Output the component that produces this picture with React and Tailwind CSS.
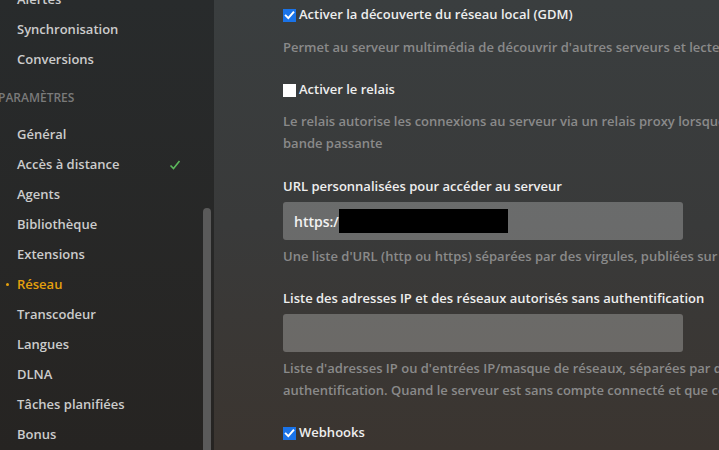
import React from "react";

const font = { fontFamily: '"Open Sans", "Noto Sans", sans-serif' };

function Check({ checked }) {
  if (!checked) {
    return <span className="block w-[13px] h-[13px] bg-white shrink-0" />;
  }
  return (
    <span className="flex items-center justify-center w-[13px] h-[13px] bg-[#1a73e8] shrink-0">
      <svg width="11" height="11" viewBox="0 0 11 11">
        <path d="M1.8 5.6 L4.3 8.1 L9.3 2.3" fill="none" stroke="white" strokeWidth="2" strokeLinecap="square" />
      </svg>
    </span>
  );
}

const items = [
  "Alertes",
  "Synchronisation",
  "Conversions",
];
const items2 = [
  "Général",
  "Accès à distance",
  "Agents",
  "Bibliothèque",
  "Extensions",
  "Réseau",
  "Transcodeur",
  "Langues",
  "DLNA",
  "Tâches planifiées",
  "Bonus",
];

function NavItem({ label }) {
  const active = label === "Réseau";
  return (
    <div className={`relative h-[30px] flex items-center pl-[17px] pr-[30px] text-[13px] font-semibold ${active ? "text-[#e5a00d]" : "text-[#cccccc]"}`}>
      {active && <span className="absolute left-[6px] top-[13px] w-[3px] h-[3px] rounded-full bg-[#e5a00d]" />}
      <span className="flex-1">{label}</span>
      {label === "Accès à distance" && (
        <svg width="12" height="12" viewBox="0 0 12 12" className="mr-[3px]">
          <path d="M1.5 6.5 L4.5 9.5 L10.5 2" fill="none" stroke="#5cb85c" strokeWidth="1.6" />
        </svg>
      )}
    </div>
  );
}

export default function App() {
  return (
    <div className="flex w-[719px] h-[450px] overflow-hidden" style={font}>
      <aside className="relative w-[214px] shrink-0 h-full bg-gradient-to-b from-[#282b2c] to-[#262422] overflow-hidden">
        <div className="-mt-[15px]">
          {items.map((l) => <NavItem key={l} label={l} />)}
          <div className="h-[45px] flex items-center -ml-[2px] text-[12px] font-semibold text-[#7a7a7a] uppercase">
            Paramètres
          </div>
          {items2.map((l) => <NavItem key={l} label={l} />)}
        </div>
        <div className="absolute left-[203px] top-[208px] w-[8px] h-[260px] rounded-full bg-[#5a5a5a]" />
      </aside>
      <main className="flex-1 h-full bg-gradient-to-b from-[#3a3e3f] via-[#393a3a] to-[#3b3530] pl-[69px] pt-[5px] text-[13px] font-semibold overflow-hidden">
        <div className="flex items-center gap-[3px] h-[20px] text-[#eeeeee] whitespace-nowrap">
          <Check checked /> Activer la découverte du réseau local (GDM)
        </div>
        <div className="mt-[11px] leading-[22px] text-[#8a8a8a] whitespace-nowrap">
          Permet au serveur multimédia de découvrir d'autres serveurs et lecteurs sur le réseau local.
        </div>
        <div className="mt-[22px] flex items-center gap-[3px] h-[20px] text-[#eeeeee] whitespace-nowrap">
          <Check checked={false} /> Activer le relais
        </div>
        <div className="mt-[10px] leading-[22px] text-[#8a8a8a] whitespace-nowrap">
          <div>Le relais autorise les connexions au serveur via un relais proxy lorsque la connexion directe n'est pas disponible. Le relais est limité en</div>
          <div>bande passante</div>
        </div>
        <div className="mt-[22px] h-[20px] leading-[20px] text-[#eeeeee] whitespace-nowrap">
          URL personnalisées pour accéder au serveur
        </div>
        <div className="mt-[6px] w-[400px] h-[38px] rounded-[3px] bg-[rgba(255,255,255,0.25)] flex items-center pl-[11px] text-[14px] text-[#f2f2f2]">
          <span>https:/</span>
          <span className="block w-[169px] h-[24px] bg-black" />
        </div>
        <div className="mt-[5px] leading-[22px] text-[#8a8a8a] whitespace-nowrap">
          Une liste d'URL (http ou https) séparées par des virgules, publiées sur plex.tv pour la découverte du serveur.
        </div>
        <div className="mt-[21px] h-[20px] leading-[20px] text-[#eeeeee] whitespace-nowrap">
          Liste des adresses IP et des réseaux autorisés sans authentification
        </div>
        <div className="mt-[6px] w-[400px] h-[38px] rounded-[3px] bg-[rgba(255,255,255,0.25)]" />
        <div className="mt-[5px] leading-[22px] text-[#8a8a8a] whitespace-nowrap">
          <div>Liste d'adresses IP ou d'entrées IP/masque de réseaux, séparées par des virgules, qui sont autorisées à accéder au serveur sans</div>
          <div>authentification. Quand le serveur est sans compte connecté et que ce paramètre est défini, l'accès est limité.</div>
        </div>
        <div className="mt-[22px] flex items-center gap-[3px] h-[20px] text-[#eeeeee] whitespace-nowrap">
          <Check checked /> Webhooks
        </div>
      </main>
    </div>
  );
}
